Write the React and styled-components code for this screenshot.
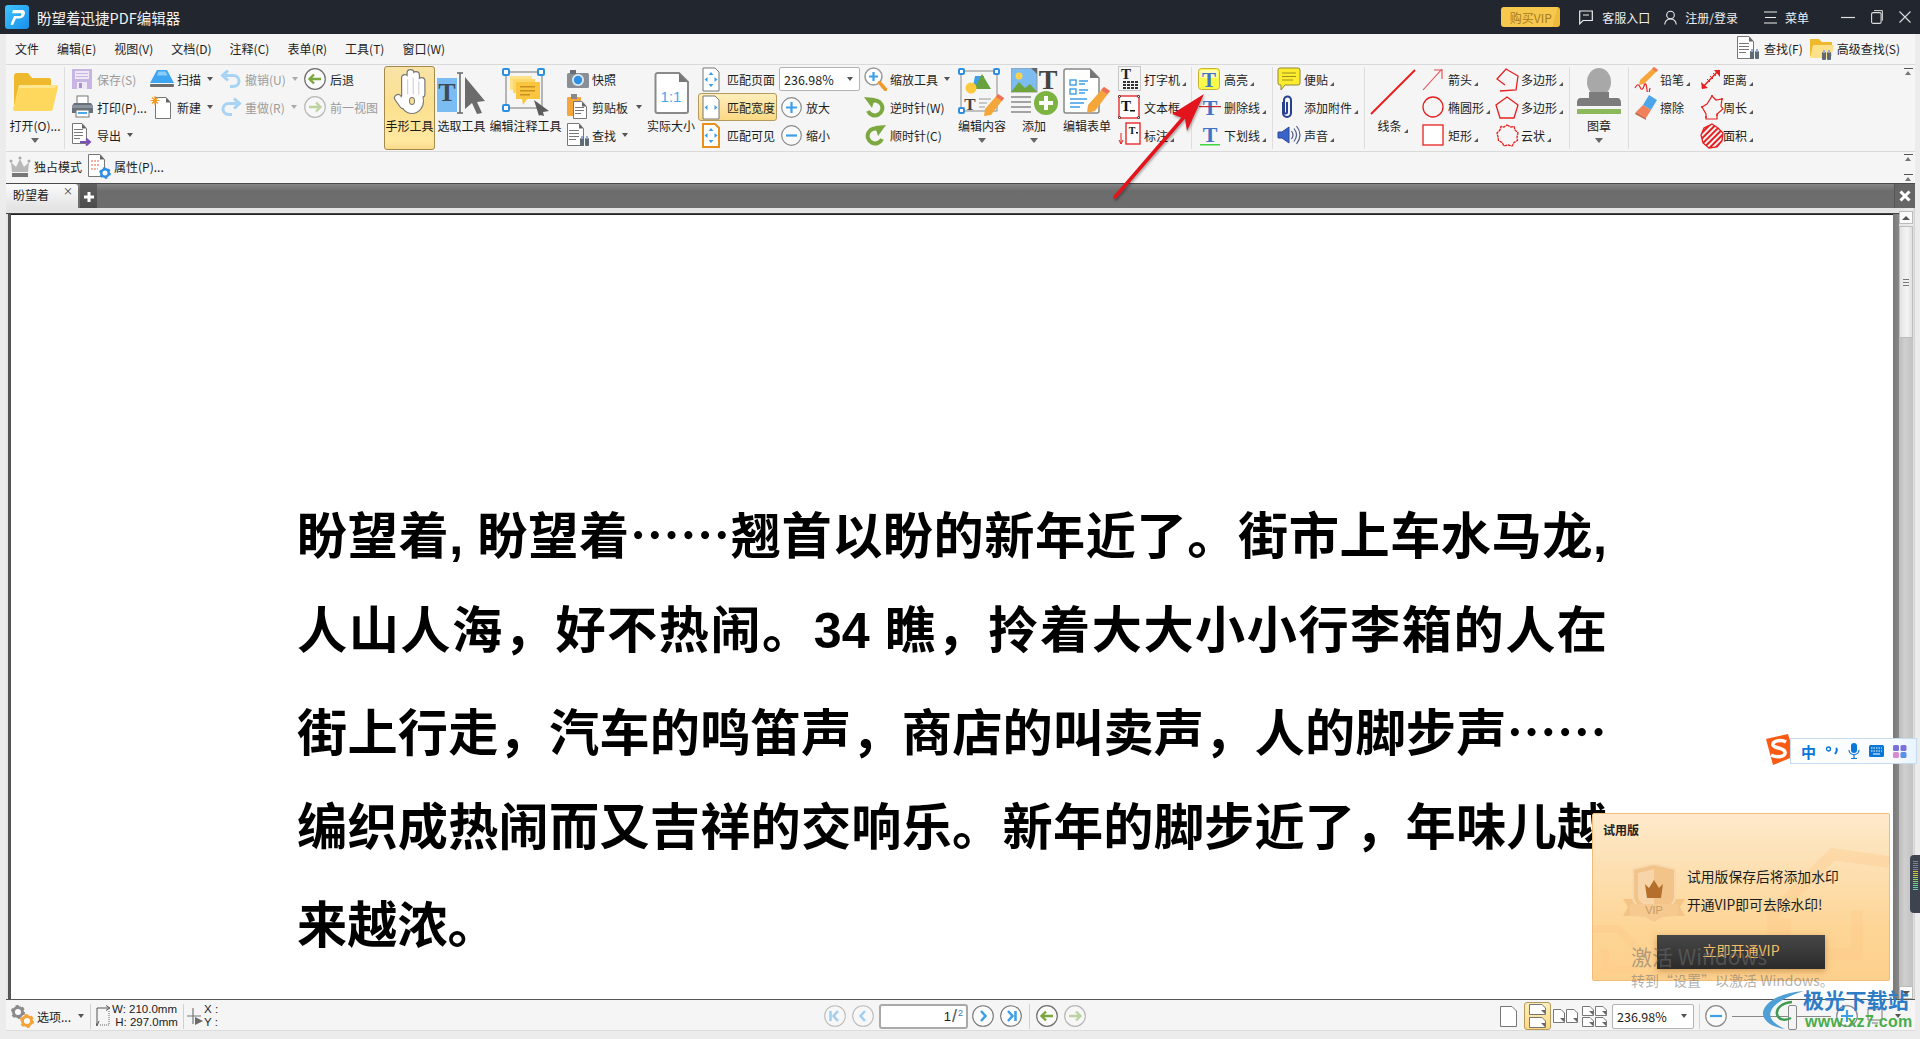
import React from 'react';
import styled, { createGlobalStyle } from 'styled-components';

const CJK = '"Noto Sans CJK SC", "Noto Sans", sans-serif';

const Global = createGlobalStyle`
  html, body { margin: 0; padding: 0; overflow: hidden; background: #ececec; }
  * { box-sizing: border-box; }
`;

const Shell = styled.div`
  position: relative; width: 1920px; height: 1039px; overflow: hidden;
  display: flex; flex-direction: column; font-family: ${CJK}; font-size: 12px; color: #1c1c1c; background: #ececec;
`;
const TitleBar = styled.header`
  height: 34px; flex: none; background: #22262e; color: #f0f0f0; display: flex; align-items: center; padding-left: 5px;
`;
const AppTitle = styled.div`font-size: 14.5px; margin-left: 8px; white-space: nowrap; color: #f2f2f2;`;
const VipButton = styled.div`
  margin-left: auto; width: 59px; height: 20px; border-radius: 3px; display: flex; align-items: center; justify-content: center;
  background: linear-gradient(105deg, #f6c94e 0 88%, #f0b93a 88%); color: #a77a22; font-size: 12px;
`;
const TitleAction = styled.div`
  display: flex; align-items: center; gap: ${p => p.$gap}px; margin-left: ${p => p.$ml}px; font-size: 12px; white-space: nowrap; color: #eee;
`;
const WinControls = styled.div`display: flex; align-items: center; margin-left: 32px; gap: 16px; padding-right: 9px;`;

const Frame = styled.div`flex: 1; min-height: 0; display: flex; flex-direction: column; margin: 0 5px 0 6px; background: #f5f5f5;`;
const MenuBar = styled.nav`
  height: 31px; flex: none; display: flex; align-items: center; gap: 18px; padding-left: 9px; border-bottom: 1px solid #d9d9d9; padding-bottom: 2px;
`;
const MenuItem = styled.span`white-space: nowrap; color: #222;`;
const MenuRight = styled.div`margin-left: auto; display: flex; align-items: center; padding-right: 15px; gap: 2px;`;
const MenuTool = styled.div`display: flex; align-items: center; gap: 3px; margin-left: ${p => p.$ml || 0}px;`;

const Ribbon = styled.section`
  height: 87px; flex: none; display: flex; border-bottom: 1px solid #d9d9d9;
`;
const Sep = styled.div`width: 1px; flex: none; background: #dedede; margin: 2px 0 2px;`;
const ColBox = styled.div`
  width: ${p => p.$w}px; flex: none; padding-left: ${p => p.$pad || 0}px; display: flex; flex-direction: column;
`;
const ToolRow = styled.div`
  height: 28px; flex: none; display: flex; align-items: center; white-space: nowrap; position: relative;
  color: ${p => p.$off ? '#9b9b9b' : '#1e1e1e'};
  ${p => p.$active ? `
    margin-left: -4px; padding-left: 4px; width: 79px; border: 1px solid #b59a5c; border-radius: 3px; padding-left: 3px;
    background: linear-gradient(#fdeebc, #fbd983);
  ` : ''}
`;
const IconSlot = styled.span`width: ${p => p.$w}px; flex: none; display: flex; align-items: center;`;
const DropArrow = styled.i`
  display: inline-block; margin-left: ${p => p.$ml || 6}px; width: 0; height: 0; border-left: 3.5px solid transparent; border-right: 3.5px solid transparent;
  border-top: 4px solid ${p => p.$off ? '#aaa' : '#555'};
`;
const CornerMark = styled.i`
  display: inline-block; align-self: flex-end; margin: 0 0 7px 2px; width: 0; height: 0; border-left: 4px solid transparent; border-bottom: 4px solid #555;
`;
const Large = styled.div`
  width: ${p => p.$w}px; flex: none; display: flex; flex-direction: column; align-items: center; height: 84px; margin-top: 1px; white-space: nowrap; border: 1px solid transparent;
  ${p => p.$active ? 'background: linear-gradient(#f8e3a6, #fbe08f 48%, #ffe9a0 90%, #f9d98a); border-color: #a58a4e; border-radius: 3px;' : ''}
`;
const LargeIcon = styled.div`height: 50px; flex: none; display: flex; align-items: center; justify-content: center;`;
const LargeLabel = styled.div`height: 18px; line-height: 18px; display: flex; align-items: center;`;
const LargeDrop = styled(DropArrow)`margin: 3px 0 0 0; border-left-width: 4px; border-right-width: 4px; border-top-width: 5px; border-top-color: #666;`;
const ZoomCombo = styled.div`
  width: ${p => p.$w}px; height: ${p => p.$h}px; flex: none; border: 1px solid #b3b3b3; border-radius: 2px; background: #fff; display: flex; align-items: center; justify-content: space-between;
  padding: 0 6px 0 4px; font-size: 12.5px; margin: ${p => p.$m || 0};
`;
const Collapse = styled.div`
  margin-left: auto; width: 9px; height: 8px; margin-right: 2px; margin-top: ${p => p.$mt || 3}px; border-top: 1px solid #555; position: relative; flex: none;
  &::after { content: ''; position: absolute; left: 1px; top: 2px; border-left: 3.5px solid transparent; border-right: 3.5px solid transparent; border-bottom: 4px solid #777; }
`;
const QuickBar = styled.div`height: 31px; flex: none; display: flex; align-items: center; padding: 0 0 2px 3px; position: relative;`;
const QuickTool = styled.div`display: flex; align-items: center; gap: 3px; margin-left: ${p => p.$ml || 0}px; white-space: nowrap;`;
const QuickEnd = styled.div`margin-left: auto; display: flex; flex-direction: column; gap: 11px; padding-top: 1px;`;

const TabBar = styled.div`
  height: 25px; flex: none; display: flex; border-top: 1px solid #4a4a4a; background: linear-gradient(#858585, #6c6c6c 30%, #6e6e6e);
`;
const Tab = styled.div`
  width: 72px; background: linear-gradient(#fafafa, #e4e4e4); border-radius: 0 3px 0 0; display: flex; justify-content: space-between; padding: 2px 5px 0 7px; font-size: 12px; color: #222;
`;
const TabClose = styled.span`font-size: 10px; line-height: 10px; color: #333;`;
const TabAdd = styled.div`
  width: 17px; margin-left: 2px; background: linear-gradient(#5f5f5f, #4c4c4c); display: flex; align-items: center; justify-content: center; padding-top: 2px;
`;
const BarClose = styled.div`margin-left: auto; width: 21px; display: flex; align-items: center; justify-content: center; border-left: 1px solid #555; background: #666;`;

const Main = styled.main`flex: 1; min-height: 0; display: flex; border-bottom: 1px solid #555;`;
const Canvas = styled.div`flex: 1; display: flex; flex-direction: column; background: #e4e4e4; padding-top: 5px; min-width: 0;`;
const CanvasInner = styled.div`
  flex: 1; min-height: 0; display: flex; padding: 1px 6px 0 5px;
  background: linear-gradient(#444 0 1px, transparent 1px), linear-gradient(90deg, #e6e6e6 0 2px, #555 2px, #555 99%, #888);
`;
const Page = styled.article`
  flex: 1; background: #fff; padding: 268px 0 0 286px; overflow: hidden; min-width: 0; border-top: 1px solid #222;
`;
const DocLine = styled.p`
  margin: 0; width: 1310px; height: 98.6px; line-height: 98.6px; font-size: 50.2px; font-weight: 700; color: #000; white-space: nowrap; font-family: "Liberation Sans", "Noto Sans CJK SC", sans-serif;
  ${p => p.$just ? 'white-space: normal; text-align: justify; text-align-last: justify;' : ''}
`;
const Dots = styled.span`font-family: "Noto Sans CJK SC", sans-serif;`;
const ScrollBar = styled.div`
  width: 16px; flex: none; padding: 3px 2px 0 0; background: linear-gradient(90deg, #e4e4e4, #eee 85%, #ccc); display: flex; flex-direction: column;
`;
const ScrollBtn = styled.div`
  height: 13px; background: #fafafa; border: 1px solid #bbb; display: flex; align-items: center; justify-content: center; flex: none;
  &::after { content: ''; border-left: 4px solid transparent; border-right: 4px solid transparent; ${p => p.$down ? 'border-top: 4px solid #555' : 'border-bottom: 4px solid #555'}; }
`;
const ScrollThumb = styled.div`
  height: 112px; flex: none; margin-top: 2px; background: linear-gradient(90deg, #e4e4e4, #f4f4f4 60%, #e0e0e0); border: 1px solid #bdbdbd; display: flex; flex-direction: column; align-items: center; justify-content: center; gap: 2px;
  & > i { width: 6px; height: 1px; background: #777; }
`;
const ScrollTrack = styled.div`flex: 1; background: linear-gradient(90deg, #bbb, #cfcfcf 40%, #c2c2c2);`;

const StatusBar = styled.footer`height: 31px; flex: none; display: flex; align-items: center; border-bottom: 1px solid #dcdcdc; padding-top: 2px;`;
const StatusLeft = styled.div`width: 818px; flex: none; display: flex; align-items: center; padding-left: 4px; height: 100%;`;
const StatusSep = styled.div`width: 1px; height: 25px; background: #d0d0d0; flex: none; margin-left: ${p => p.$ml || 0}px; margin-right: ${p => p.$mr || 0}px;`;
const DimText = styled.div`display: flex; flex-direction: column; line-height: 13.5px; font-size: 11.5px; font-family: "Liberation Sans", ${CJK}; white-space: nowrap; width: ${p => p.$w}px;`;
const StatusNav = styled.div`width: 676px; flex: none; display: flex; align-items: center; gap: 6px; height: 100%;`;
const PageInput = styled.div`
  width: 89px; height: 25px; flex: none; margin: 0 -2px 0 -1px; background: #fff; border: 2px solid #a9a9a9; border-radius: 3px; display: flex; align-items: center; justify-content: flex-end; padding-right: 3px; font-family: "Liberation Sans", sans-serif; font-size: 13px;
`;
const PageSlash = styled.span`color: #555; font-size: 18px; margin: 0 1px; font-weight: 300; line-height: 18px;`;
const PageTotal = styled.sup`font-size: 9px; color: #2b79c2; align-self: flex-start; margin-top: 2px; line-height: 10px;`;
const StatusRight = styled.div`flex: 1; display: flex; align-items: center; height: 100%;`;
const StatusItem = styled.div`
  flex: none; margin-left: ${p => p.$ml || 0}px; display: flex; align-items: center; justify-content: center;
  ${p => p.$on ? 'width: 27px; height: 28px; border: 1px solid #b59a5c; border-radius: 3px; background: linear-gradient(#fdeebc, #fbd983);' : ''}
`;
const Slider = styled.div`
  width: 99px; height: 1px; flex: none; background: #888; position: relative; margin-left: 5px;
  &::after { content: ''; position: absolute; left: 56px; top: -11px; width: 7px; height: 23px; border: 1px solid #888; border-radius: 2px; background: #f4f4f4; }
`;

const Popup = styled.aside`
  position: absolute; left: 1592px; top: 813px; width: 298px; height: 168px; border: 1px solid #f0bc78; border-radius: 2px;
  background: linear-gradient(#fde9cb, #fdd595 70%, #fdd08c); overflow: hidden;
`;
const PopupTitle = styled.div`position: absolute; left: 10px; top: 7px; font-size: 12px; font-weight: 700; color: #222;`;
const PopupBody = styled.div`position: absolute; left: 94px; top: 48px; font-size: 13.8px; line-height: 28px; color: #1c1c1c; white-space: nowrap;`;
const PopupBtn = styled.div`
  position: absolute; left: 64px; top: 121px; width: 168px; height: 34px; padding-bottom: 5px; background: linear-gradient(#474747, #2b2b2b); color: #f5bd68; font-size: 14px;
  display: flex; align-items: center; justify-content: center; box-shadow: 0 2px 6px rgba(160,100,30,.5);
`;
const PopupDeco = styled.svg`position: absolute; left: 0; top: 0;`;
const PopupBadge = styled.svg`position: absolute; left: 30px; top: 50px;`;
const Activate = styled.div`
  position: absolute; left: 1631px; top: 941px; color: rgba(110,110,110,.55); pointer-events: none; white-space: nowrap;
`;
const ActivateBig = styled.div`font-size: 21px; line-height: 30px;`;
const ActivateSmall = styled.div`font-size: 14px; line-height: 20px; margin-top: -1px;`;
const ImeBar = styled.div`
  position: absolute; left: 1790px; top: 738px; width: 127px; height: 26px; background: linear-gradient(90deg, #fff, #f8fbff 80%, #e8f4ff); border: 1px solid #c7dcf1; display: flex; align-items: center; padding-left: 10px; gap: 9px;
`;
const ImeZh = styled.span`color: #0a76d8; font-size: 15px; font-weight: 700; line-height: 15px;`;
const ImeLogo = styled.svg`position: absolute; left: 1762px; top: 733px;`;
const SideWidget = styled.div`
  position: absolute; left: 1910px; top: 855px; width: 10px; height: 58px; border-radius: 4px 0 0 4px; background: #3d4450; padding: 6px 0 0 3px;
  display: flex; flex-direction: column; gap: 1px;
`;
const SideTick = styled.i`width: 5px; height: 1px; flex: none; background: ${p => p.$c};`;
const Watermark = styled.div`position: absolute; left: 1803px; top: 986px; pointer-events: none; white-space: nowrap;`;
const WatermarkTitle = styled.div`font-size: 21px; line-height: 27px; font-weight: 700; color: #2d7cc6; letter-spacing: .2px;`;
const WatermarkUrl = styled.div`font-size: 16px; line-height: 17px; font-weight: 700; color: #49ad4c; font-family: "Liberation Sans", sans-serif; margin-left: 2px; letter-spacing: .3px;`;
const WatermarkLogo = styled.svg`position: absolute; left: 1762px; top: 990px; pointer-events: none;`;
const RedArrow = styled.svg`position: absolute; left: 1105px; top: 85px; pointer-events: none; filter: drop-shadow(1px 2px 1px rgba(0,0,0,.3));`;

/* ---------- icons ---------- */
const S = ({ w, h, children }) => <svg width={w} height={h} viewBox={`0 0 ${w} ${h}`} fill="none" style={{ display: 'block', flex: 'none' }}>{children}</svg>;
const Doc = ({ x = 0, y = 0, w = 16, h = 22, s = '#777' }) => (
  <g transform={`translate(${x} ${y})`}>
    <path d={`M.5 .5H${w - 5}L${w - .5} 5.5V${h - .5}H.5z`} fill="#fff" stroke={s} />
    <path d={`M${w - 5} .5L${w - .5} 5.5H${w - 5}z`} fill="#666" />
  </g>
);
const Lines = ({ x, y, n = 3, w = 8, gap = 3, c = '#777' }) => Array.from({ length: n }, (_, i) => <rect key={i} x={x} y={y + i * gap} width={i === n - 1 ? w - 3 : w} height="1" fill={c} />);
const Binoc = ({ x, y }) => (
  <g transform={`translate(${x} ${y})`} fill="#5e6a74"><rect x="0" y="2" width="4" height="8" rx="1" /><rect x="5" y="2" width="4" height="8" rx="1" /><rect x="1" y="0" width="2" height="3" fill="#9ac" /><rect x="6" y="0" width="2" height="3" fill="#9ac" /></g>
);
const TT = ({ x, y, size = 22, c = '#3f74c8' }) => <text x={x} y={y} fontFamily="Liberation Serif" fontWeight="700" fontSize={size} fill={c} textAnchor="middle">T</text>;

const LogoIcon = () => <S w={24} h={24}><defs><linearGradient id="lg" x1="0" y1="0" x2="1" y2="1"><stop stopColor="#3ec3ff" /><stop offset="1" stopColor="#1a8fe8" /></linearGradient></defs><rect width="24" height="24" rx="3" fill="url(#lg)" /><path d="M8 5h8.500c3 0 4 2 3.200 4.500-.8 2.600-3 4-5.700 4H11L8 20 5.500 19.500 9 11h5c1.500 0 2.200-.6 2.400-1.600.1-.8-.3-1.200-1.200-1.200H7z" fill="#fff" /></S>;
const FolderIcon = () => <S w={46} h={38}><path d="M2 3a3 3 0 013-3h11l4 5h17a2 2 0 012 2v26H2z" fill="#eeb92d" /><path d="M7 12h37a2 2 0 012 2l-5 21a3 3 0 01-3 3H3a2 2 0 01-2-2z" fill="#fdd85c" /><path d="M7 12h37l-1 3H7L3 32z" fill="#ffe68f" /></S>;
const SaveIcon = () => <S w={22} h={22}><path d="M1 1h20v20H1z" fill="#c7b6e3" rx="2" /><rect x="4" y="3" width="14" height="8" fill="#efe9f7" /><rect x="5" y="5" width="12" height="1" fill="#c7b6e3" /><rect x="5" y="8" width="12" height="1" fill="#c7b6e3" /><rect x="6" y="14" width="10" height="7" fill="#efe9f7" /><rect x="8" y="15" width="3" height="5" fill="#a795c9" /></S>;
const ScanIcon = () => <S w={24} h={20}><path d="M7 1h10l7 13H0z" fill="#3ea5f3" /><path d="M8.500 2.500h7l2 4H7z" fill="#8bcdfa" /><rect x="0" y="15" width="24" height="3" rx="1" fill="#6c6c6c" /></S>;
const UndoIcon = ({ flip }) => <S w={22} h={20}><g transform={flip ? 'translate(22 0) scale(-1 1)' : ''} stroke="#a7d3f5" strokeWidth="3" fill="none"><path d="M5 6.500h8c8 0 8 11 0 11h-3" /><path d="M8 1.500L2.500 6.500l5.500 5" /></g></S>;
const BackIcon = ({ flip, off, size = 22 }) => <S w={size} h={size}><g opacity={off ? .45 : 1}><circle cx={size / 2} cy={size / 2} r={size / 2 - .7} fill="#fbfbfb" stroke="#6f6f6f" strokeWidth="1.200" /><g transform={`translate(${size / 2} ${size / 2}) scale(${flip ? -1 : 1} 1)`} stroke="#7aa83c" strokeWidth="2.400" fill="none"><path d="M6 0H-5M-1 -4.500L-5.500 0-1 4.500" /></g></g></S>;
const PrintIcon = () => <S w={23} h={24}><rect x="6" y="1" width="11" height="8" fill="#fff" stroke="#777" /><path d="M3 8h17l2 3v7H1v-7z" fill="#67717b" /><rect x="1" y="10" width="21" height="3" fill="#8b949c" /><rect x="5" y="15" width="13" height="7" fill="#fff" stroke="#777" /><rect x="7" y="17" width="9" height="2" fill="#4aa8ef" /></S>;
const NewIcon = () => <S w={22} h={25}><Doc x={5} y={2} w={16} h={22} /><g stroke="#f79a1d" strokeWidth="1.200"><path d="M5 1v9M.5 5.500h9M2 2.500l6 6M8 2.500l-6 6" /></g></S>;
const ExportIcon = () => <S w={22} h={24}><Doc x={1} y={0} w={15} h={21} /><Lines x={3} y={6} n={4} w={9} /><path d="M9 19h9M15 15.500l4 3.500-4 3.500" stroke="#7a4fb8" strokeWidth="2" fill="none" /></S>;
const HandIcon = () => <S w={36} h={48}><g strokeLinecap="round"><g stroke="#787878" strokeWidth="8"><path d="M13 26V10M18.500 26V5M24 26V7M29.500 26V13M6 30l5 7" /><ellipse cx="20" cy="33" rx="7" ry="8" strokeWidth="10" /></g><g stroke="#fff" strokeWidth="5.600"><path d="M13 26V10M18.500 26V5M24 26V7M29.500 26V13M6 30l5 7" /><ellipse cx="20" cy="33" rx="7" ry="8" strokeWidth="8" /></g><g stroke="#bbb" strokeWidth=".8"><path d="M15.700 26V12M21.200 26V10M26.800 26V14" /></g></g></S>;
const SelectIcon = () => <S w={49} h={46}><rect x="0" y="9" width="20" height="34" fill="#7bbcf2" /><TT x={10} y={32} size={26} c="#3e4a55" /><path d="M20 4h6M20 44h6M23 4v40" stroke="#666" strokeWidth="1.500" /><path d="M28 8l20 24-8 1 5 11-5 1-5-11-7 6z" fill="#6b6b6b" /></S>;
const AnnotIcon = () => <S w={48} h={48}><rect x="4" y="4" width="36" height="36" fill="none" stroke="#8a8a8a" strokeWidth="1.200" /><g fill="#fff" stroke="#2e8fe0" strokeWidth="2"><rect x="1" y="1" width="6" height="6" rx="1" /><rect x="36" y="1" width="6" height="6" rx="1" /><rect x="1" y="37" width="6" height="6" rx="1" /></g><rect x="8" y="8" width="22" height="14" fill="#fde28a" /><rect x="11" y="11" width="22" height="14" fill="#fdd768" /><path d="M14 14h24v17H25l-4 6-1-6h-6z" fill="#fbc63f" /><g fill="#c98f20"><rect x="18" y="18" width="15" height="1.500" /><rect x="18" y="22" width="15" height="1.500" /><rect x="18" y="26" width="10" height="1.500" /></g><path d="M32 32l15 11-6 1 1 4-4-1-1 1z" fill="#5c5c5c" /></S>;
const CameraIcon = () => <S w={22} h={20}><rect x="0" y="4" width="22" height="15" rx="1.500" fill="#8a8f96" /><rect x="3" y="1" width="6" height="4" fill="#6a6f76" /><circle cx="11" cy="11" r="6" fill="#dce9f4" /><circle cx="11" cy="11" r="4.200" fill="#2f8fe3" /></S>;
const ClipIcon = () => <S w={22} h={26}><rect x="0" y="3" width="14" height="19" rx="1" fill="#f4a73c" /><rect x="4" y="0" width="6" height="5" fill="#888" /><Doc x={6} y={7} w={14} h={18} /><Lines x={8} y={13} n={3} w={9} /></S>;
const FindIcon = () => <S w={24} h={25}><Doc x={0} y={0} w={17} h={23} /><Lines x={2} y={7} n={4} w={10} /><Binoc x={13} y={13} /></S>;
const ActualIcon = () => <S w={35} h={43}><path d="M1.500 4a2 2 0 012-2H25l9 9v29a2 2 0 01-2 2H3.500a2 2 0 01-2-2z" fill="#fff" stroke="#8a8a8a" strokeWidth="2" /><path d="M25 2l9 9h-9z" fill="#777" /><text x="17" y="31" fontFamily="Liberation Sans" fontSize="15" fill="#49a5ea" textAnchor="middle">1:1</text></S>;
const FitIcon = ({ width, border }) => <S w={18} h={25}><path d="M1 1h12l4 4v19H1z" fill="#fff" stroke={border ? '#e98f1e' : '#777'} strokeWidth={border ? 2 : 1} /><g fill="#3d9fe8"><path d="M2.500 12.500l3-2.500v5zM15.500 12.500l-3-2.500v5z" />{!width && <path d="M9 5l-2.500 3h5zM9 20l-2.500-3h5z" />}</g></S>;
const CirclePM = ({ minus, size = 21 }) => <S w={size} h={size}><circle cx={size / 2} cy={size / 2} r={size / 2 - .7} fill="#fafafa" stroke="#8a8a8a" strokeWidth="1.200" /><path d={minus ? `M5 ${size / 2}h${size - 10}` : `M5 ${size / 2}h${size - 10}M${size / 2} 5v${size - 10}`} stroke="#3d9fe8" strokeWidth="2.200" /></S>;
const ZoomToolIcon = () => <S w={23} h={24}><circle cx="9.500" cy="9.500" r="8.500" fill="#fff" stroke="#999" strokeWidth="1.500" /><path d="M5 9.500h9M9.500 5v9" stroke="#3d9fe8" strokeWidth="2.200" /><path d="M15.500 15.500l6 7" stroke="#f09a2b" strokeWidth="3.500" strokeLinecap="round" /></S>;
const RotateIcon = ({ flip }) => <S w={22} h={22}><g transform={flip ? 'translate(22 0) scale(-1 1)' : ''}><path d="M7 5.500a7.500 7.500 0 11-3 9.500" stroke="#7ba93f" strokeWidth="4" fill="none" /><path d="M0 1l11 1-3 10z" fill="#7ba93f" /></g></S>;
const EditContentIcon = () => <S w={48} h={48}><rect x="3" y="3" width="36" height="40" fill="none" stroke="#8a8a8a" /><g fill="#fff" stroke="#2e8fe0" strokeWidth="2"><rect x="1" y="1" width="5" height="5" rx="1" /><rect x="36" y="1" width="5" height="5" rx="1" /><rect x="1" y="40" width="5" height="5" rx="1" /></g><path d="M17 8h9v10H15z" fill="#3d9fe8" /><path d="M24 6l9 15H16z" fill="#67a23f" /><circle cx="13" cy="20" r="5.500" fill="#fdc93d" /><TT x={12} y={42} size={17} c="#444" /><path d="M21 31h12M21 35h8M21 39h6" stroke="#999" /><path d="M40 26l6 4-13 17-7 1 1-7z" fill="#f5a63b" /><path d="M40 26l6 4-2 3-6-4z" fill="#ef6f5a" /></S>;
const AddIcon = () => <S w={47} h={48}><rect x="0" y="0" width="26" height="24" fill="#7cbcf0" stroke="#999" /><path d="M0 24l8-10 6 6 5-4 7 8z" fill="#6fa53d" /><circle cx="8" cy="8" r="3.500" fill="#fdd24f" /><path d="M20 0h6v6z" fill="#666" /><TT x={37} y={21} size={28} c="#444" /><path d="M0 29h20M0 34h20M0 39h20M0 44h20" stroke="#888" strokeWidth="1.500" /><circle cx="35" cy="35" r="12" fill="#7cb342" /><path d="M28 35h14M35 28v14" stroke="#fff" strokeWidth="4" /></S>;
const FormIcon = () => <S w={48} h={48}><path d="M1 3a2 2 0 012-2h24l9 9v33a2 2 0 01-2 2H3a2 2 0 01-2-2z" fill="#fff" stroke="#888" strokeWidth="1.500" /><path d="M27 1l9 9h-9z" fill="#777" /><g fill="none" stroke="#3d9fe8" strokeWidth="1.400"><rect x="7" y="12" width="6" height="5" /><rect x="7" y="21" width="6" height="5" /></g><g stroke="#3d9fe8" strokeWidth="1.500"><path d="M16 13h9M16 16h6M16 22h9M16 25h6M7 31h17M7 35h14M7 39h10" /></g><path d="M41 19l6 4-15 20-8 2 1-8z" fill="#f5a63b" /><path d="M41 19l6 4-3 3-6-4z" fill="#ef6f5a" /></S>;
const TypewriterIcon = () => <S w={24} h={26}><rect x=".5" y=".5" width="22" height="24" stroke="#999" strokeDasharray="1 1" /><TT x={8} y={13} size={15} c="#222" /><g fill="#333">{[0, 1, 2].map(r => [0, 1, 2, 3].map(c => <rect key={`${r}${c}`} x={5 + c * 4} y={15 + r * 3} width="3" height="2" />))}</g></S>;
const BoxTIcon = () => <S w={22} h={24}><rect x="1" y="1" width="20" height="22" stroke="#e61c1c" strokeWidth="1.300" fill="#fff" /><g fill="#fff" stroke="#222"><circle cx="1.500" cy="1.500" r="1" /><circle cx="20.500" cy="1.500" r="1" /><circle cx="1.500" cy="22.500" r="1" /><circle cx="20.500" cy="22.500" r="1" /></g><TT x={8} y={16} size={15} c="#111" /><rect x={12} y={15} width="5" height="1.500" fill="#111" /></S>;
const CalloutIcon = () => <S w={24} h={26}><g transform="translate(7 0)"><rect x="1" y="1" width="14" height="21" stroke="#e61c1c" strokeWidth="1.300" fill="#fff" /><TT x={7} y={12} size={10} c="#111" /><rect x="11" y="10" width="2" height="1.500" fill="#111" /></g><path d="M3 11v11M1 18l2 4 2-4" stroke="#e61c1c" /></S>;
const HighlightIcon = () => <S w={22} h={22}><rect x=".5" y=".5" width="21" height="21" rx="3" fill="#fafa4c" stroke="#c8b32f" /><rect x="2" y="2" width="18" height="8" rx="2" fill="#fdfdb4" /><TT x={11} y={19} size={21} /></S>;
const StrikeIcon = () => <S w={24} h={22}><TT x={12} y={19} size={22} /><rect x="1" y="10" width="22" height="1.200" fill="#c42a2a" /></S>;
const UnderIcon = () => <S w={24} h={23}><TT x={12} y={18} size={22} /><rect x="2" y="20" width="20" height="1.500" fill="#3ed83e" /></S>;
const NoteIcon = () => <S w={24} h={24}><path d="M3 1h18a2 2 0 012 2v13a2 2 0 01-2 2H8l-4 5v-5H3a2 2 0 01-2-2V3a2 2 0 012-2z" fill="#fdec2e" stroke="#8e8a2b" /><path d="M5 6h14M5 9.500h14M5 13h11" stroke="#9a8f25" /></S>;
const PaperclipIcon = () => <S w={20} h={25}><path d="M6 7v11a4 4 0 008 0V5a3.500 3.500 0 00-7 0v12a1.500 1.500 0 003 0V7" stroke="#27418f" strokeWidth="2" fill="none" /></S>;
const SpeakerIcon = () => <S w={24} h={22}><path d="M1 8h4l7-5v16l-7-5H1z" fill="#3a63c8" stroke="#2b4a9a" /><path d="M14.500 7q3 4 0 8M17 4.500q5 6.500 0 13M19.500 2q7 9 0 18" stroke="#4d5a89" strokeWidth="1.200" fill="none" /></S>;
const LineIcon = () => <S w={46} h={46}><path d="M1 45L45 1" stroke="#e91f1f" strokeWidth="2" /></S>;
const ArrowIcon = () => <S w={22} h={24}><path d="M1 23L20 2M12 3h8v9" stroke="#e5484d" strokeWidth="1.100" /></S>;
const EllipseIcon = () => <S w={22} h={24}><circle cx="11" cy="12" r="10" stroke="#e62020" strokeWidth="1.300" /></S>;
const RectIcon = () => <S w={22} h={24}><rect x="1" y="2" width="20" height="20" stroke="#e62020" strokeWidth="1.300" fill="#fff" /></S>;
const PolylineIcon = () => <S w={24} h={25}><path d="M5 24l16-1 2-14L11 2 2 12l8 6" stroke="#e62020" strokeWidth="1.300" /></S>;
const PentagonIcon = () => <S w={24} h={25}><path d="M12 2l11 8-4 13H5L1 10z" stroke="#e62020" strokeWidth="1.300" /></S>;
const CloudIcon = () => <S w={24} h={25}><path d="M12 2l4 2 3-.5 1 3.500 3 3-1 4 .5 3.500-3.500 2-2 3.500-4-1-4 1-2-3.500-3.500-2L3 14l-1-4 3-3 1-3.500L9 4z" stroke="#e62020" strokeWidth="1.300" strokeDasharray="3 .6" /></S>;
const StampIcon = () => <S w={46} h={48}><ellipse cx="23" cy="14" rx="12" ry="14" fill="#a8a8a8" /><path d="M13 24h20v6h8c3 0 4 2 4 5v3H1v-3c0-3 1-5 4-5h8z" fill="#7c7c7c" /><rect x="1" y="41" width="44" height="5" fill="#8cb85c" /></S>;
const PencilIcon = () => <S w={25} h={26}><path d="M20 1l4 3-14 14-5 1 1-5z" fill="#f5a73c" /><path d="M20 1l4 3-2 2-4-3z" fill="#ef7a5a" /><path d="M1 22q3-6 5-1t4-1 3 4 3-2" stroke="#e62020" strokeWidth="1.200" /></S>;
const EraserIcon = () => <S w={24} h={26}><path d="M15 1l8 5-6 10-8-5z" fill="#4ea6ea" /><path d="M9 11l8 5-5 8-10-6z" fill="#f0805a" /><path d="M2 18l10 6v2L1 20z" fill="#c86a4a" /></S>;
const DistanceIcon = () => <S w={21} h={22}><path d="M2 20L19 2" stroke="#e62020" strokeWidth="1.500" /><path d="M14 2h6v7zM1 14l1 7 6-1z" fill="#e62020" /><path d="M7 11l3 3M10 8l3 3M13 5l3 3" stroke="#e62020" /></S>;
const PerimIcon = () => <S w={24} h={26}><path d="M12 2l4 4 6-1-1 7 2 3-6 5v5H6v-5l-4-7 5-3z" stroke="#e62020" strokeWidth="1.200" /><g fill="#e62020"><circle cx="12" cy="2" r="1" /><circle cx="22" cy="5" r="1" /><circle cx="2" cy="13" r="1" /><circle cx="6" cy="23" r="1" /><circle cx="17" cy="21" r="1" /></g></S>;
const AreaIcon = () => <S w={24} h={27}><defs><pattern id="hatch" width="4" height="4" patternUnits="userSpaceOnUse" patternTransform="rotate(45)"><rect width="2" height="4" fill="#e62020" /></pattern></defs><path d="M12 2l6 4 5 5-1 8-5 6-8 1-6-5-2-8 3-7z" fill="url(#hatch)" stroke="#e62020" strokeWidth="1.300" /></S>;
const CrownIcon = () => <S w={22} h={22}><path d="M2 6l5 5 4-8 4 8 5-5-1 10H3z" fill="#b8b8b8" /><circle cx="2" cy="5" r="1.500" fill="#aaa" /><circle cx="11" cy="2" r="1.500" fill="#aaa" /><circle cx="20" cy="5" r="1.500" fill="#aaa" /><rect x="3" y="17" width="16" height="4" fill="#777" /></S>;
const Gear = ({ x, y, r, c }) => <g transform={`translate(${x} ${y})`}><circle r={r * .75} stroke={c} strokeWidth={r * .5} fill="#fff" /><circle r={r} stroke={c} strokeWidth={r * .35} strokeDasharray={`${r * .5} ${r * .55}`} fill="none" /></g>;
const PropsIcon = () => <S w={23} h={26}><Doc x={0} y={0} w={17} h={23} /><path d="M3 7h9M3 11h9M3 15h7" stroke="#e9633a" strokeDasharray="2 1" /><Gear x={17} y={19} r={5} c="#2f8fe3" /></S>;
const GearsIcon = () => <S w={24} h={23}><Gear x={8} y={7} r={6} c="#8b8b8b" /><Gear x={17} y={16} r={6} c="#f4a437" /></S>;
const SizeIcon = () => <S w={16} h={23}><path d="M1 9V3h12M10 .5l4 2.500-4 2.500M1 9v11M-1 16l2 5 2-5" stroke="#555" fill="none" /><path d="M4 20h10M13 6v13" stroke="#666" strokeDasharray="1 1" /></S>;
const CrossIcon = () => <S w={17} h={23}><path d="M6 3v16M0 11h14" stroke="#777" strokeWidth="1.200" /><path d="M8 12l8 4-8 4z" fill="#6a6a6a" /></S>;
const NavIcon = ({ kind, off }) => <S w={22} h={22}><g opacity={off ? .45 : 1}><circle cx="11" cy="11" r="10.300" fill="#fbfbfb" stroke="#777" strokeWidth="1.100" /><g stroke="#3d9fe8" strokeWidth="2.500" fill="none">{kind === 'first' && <path d="M6.500 6v10M14 6l-4.500 5 4.500 5" />}{kind === 'prev' && <path d="M13 6l-4.500 5 4.500 5" />}{kind === 'next' && <path d="M9 6l4.500 5-4.500 5" />}{kind === 'last' && <path d="M15.500 6v10M8 6l4.500 5-4.500 5" />}</g></g></S>;
const PageGlyph = ({ kind }) => {
  const p = (x, y, w, h, k) => <g key={k}><path d={`M${x + .5} ${y + .5}H${x + w - 4}L${x + w - .5} ${y + 4}V${y + h - .5}H${x + .5}z`} fill="#fff" stroke="#777" /><path d={`M${x + w - 5} ${y + h - 5}h4v4z`} fill="#666" /></g>;
  if (kind === 'one') return <S w={17} h={21}><path d="M.5 .5H12L16.500 5V20.500H.5z" fill="#fff" stroke="#777" /></S>;
  if (kind === 'two') return <S w={25} h={16}>{p(0, 1, 12, 14, 1)}{p(13, 1, 12, 14, 2)}</S>;
  if (kind === 'four') return <S w={25} h={21}>{p(0, 0, 12, 10, 1)}{p(13, 0, 12, 10, 2)}{p(0, 11, 12, 10, 3)}{p(13, 11, 12, 10, 4)}</S>;
  return <S w={17} h={24}>{p(0, 0, 17, 11, 1)}{p(0, 13, 17, 11, 2)}</S>;
};
const FitWinIcon = () => <S w={16} h={16}><path d="M1 1h14v11H1z" stroke="#777" /><path d="M5 15h6" stroke="#777" /></S>;
const TitleIconChat = () => <S w={14} h={15}><path d="M.7 1h12.600v9.500H4L.7 13.800z" stroke="#eee" strokeWidth="1.200" /><path d="M4 5h6" stroke="#eee" /></S>;
const TitleIconUser = () => <S w={13} h={15}><circle cx="6.500" cy="5" r="3.800" stroke="#eee" strokeWidth="1.100" /><path d="M.7 14.500c.5-3.500 2.500-5.500 5.800-5.500s5.300 2 5.800 5.500" stroke="#eee" strokeWidth="1.100" /></S>;
const TitleIconMenu = () => <S w={13} h={13}><path d="M0 1h13M1 6.500h11M0 12h13" stroke="#eee" /></S>;
const WinMin = () => <S w={14} h={14}><path d="M0 7.500h14" stroke="#ddd" strokeWidth="1.200" /></S>;
const WinMax = () => <S w={12} h={14}><rect x=".6" y="2.600" width="9.500" height="10.800" rx="1.500" stroke="#ddd" strokeWidth="1.100" /><path d="M3 .6h8.400v10" stroke="#ddd" /></S>;
const WinClose = () => <S w={12} h={12}><path d="M.5 .5l11 11M11.500 .5l-11 11" stroke="#ddd" strokeWidth="1.100" /></S>;
const WhiteX = () => <S w={12} h={12}><path d="M1.500 1.500l9 9M10.500 1.500l-9 9" stroke="#fff" strokeWidth="3" /></S>;
const WhitePlus = () => <S w={10} h={10}><path d="M0 5h10M5 0v10" stroke="#fff" strokeWidth="3" /></S>;
const ImePunct = () => <S w={14} h={14}><circle cx="3.500" cy="5" r="2" stroke="#0a76d8" strokeWidth="1.300" /><path d="M11 4q2 2-1 6" stroke="#0a76d8" strokeWidth="2" /></S>;
const ImeMic = () => <S w={12} h={16}><rect x="3" y="0" width="6" height="10" rx="3" fill="#0a76d8" /><path d="M1 7c0 6 10 6 10 0M6 12v3M3 15.500h6" stroke="#0a76d8" strokeWidth="1.200" /></S>;
const ImeKeys = () => <S w={15} h={12}><rect width="15" height="12" rx="1.500" fill="#0a76d8" /><path d="M2 3h11M2 6h11" stroke="#fff" strokeDasharray="1.500 1" /><path d="M4 9h7" stroke="#fff" /></S>;
const ImeGrid = () => <S w={14} h={13}><rect width="6" height="6" rx="1.500" fill="#7b6fd8" /><rect x="7.500" width="6" height="6" rx="1.500" fill="#7b6fd8" /><rect y="7" width="6" height="6" rx="1.500" fill="#d88bd0" /><rect x="7.500" y="7" width="6" height="6" rx="1.500" fill="#5b8fe8" /></S>;
const FolderFindIcon = () => <S w={24} h={25}><path d="M0 3h9l3 3h10v14H0z" fill="#eeb92d" /><path d="M3 9h21l-3 13H0z" fill="#fde08a" /><Binoc x={12} y={14} /></S>;

/* ---------- composites ---------- */
const Col = ({ w, pad, slot, rows, children }) => (
  <ColBox $w={w} $pad={pad}>
    {children}
    {rows.map((r, i) => (
      <ToolRow key={i} $off={r.off} $active={r.active}>
        <IconSlot $w={slot}>{r.icon}</IconSlot>
        {r.label}
        {r.arrow && <DropArrow $off={r.off} $ml={r.ml} />}
        {r.corner && <CornerMark />}
      </ToolRow>
    ))}
  </ColBox>
);
const LargeTool = ({ w, icon, label, drop, corner, active }) => (
  <Large $w={w} $active={active}>
    <LargeIcon>{icon}</LargeIcon>
    <LargeLabel>{label}{corner && <CornerMark style={{ marginBottom: 2 }} />}</LargeLabel>
    {drop && <LargeDrop />}
  </Large>
);

const docLines = [
  { t: '盼望着, 盼望着……翘首以盼的新年近了。街市上车水马龙,', just: true },
  { t: '人山人海，好不热闹。34 瞧，拎着大大小小行李箱的人在', just: true },
  { t: '街上行走，汽车的鸣笛声，商店的叫卖声，人的脚步声……', just: true },
  { t: '编织成热闹而又吉祥的交响乐。新年的脚步近了，年味儿越', just: true },
  { t: '来越浓。' },
];
const menus = ['文件', '编辑(E)', '视图(V)', '文档(D)', '注释(C)', '表单(R)', '工具(T)', '窗口(W)'];
const ticks = ['#7a828e', '#7a828e', '#7a828e', '#7a828e', '#7a828e', '#d8c23c', '#d8c23c', '#c6d04a', '#a8d060', '#8ed070', '#8ed070', '#70d090', '#70d0a0', '#60d0b0', '#60c8c0'];

const FooterGap = styled.div`height: 8px; flex: none;`;

export default function App() {
  return (
    <Shell>
      <Global />
      <TitleBar>
        <LogoIcon />
        <AppTitle>盼望着迅捷PDF编辑器</AppTitle>
        <VipButton>购买VIP</VipButton>
        <TitleAction $gap={9} $ml={19}><TitleIconChat />客服入口</TitleAction>
        <TitleAction $gap={8} $ml={14}><TitleIconUser />注册/登录</TitleAction>
        <TitleAction $gap={8} $ml={26}><TitleIconMenu />菜单</TitleAction>
        <WinControls><WinMin /><WinMax /><WinClose /></WinControls>
      </TitleBar>
      <Frame>
        <MenuBar>
          {menus.map(m => <MenuItem key={m}>{m}</MenuItem>)}
          <MenuRight>
            <MenuTool><FindIcon />查找(F)</MenuTool>
            <MenuTool $ml={5}><FolderFindIcon />高级查找(S)</MenuTool>
          </MenuRight>
        </MenuBar>
        <Ribbon>
          <LargeTool w={58} icon={<FolderIcon />} label="打开(O)..." drop />
          <Sep />
          <Col w={85} pad={6} slot={26} rows={[
            { icon: <SaveIcon />, label: '保存(S)', off: true },
            { icon: <PrintIcon />, label: '打印(P)...' },
            { icon: <ExportIcon />, label: '导出', arrow: true },
          ]} />
          <Col w={70} slot={27} rows={[
            { icon: <ScanIcon />, label: '扫描', arrow: true },
            { icon: <NewIcon />, label: '新建', arrow: true },
          ]} />
          <Col w={84} slot={25} rows={[
            { icon: <UndoIcon />, label: '撤销(U)', off: true, arrow: true },
            { icon: <UndoIcon flip />, label: '重做(R)', off: true, arrow: true },
          ]} />
          <Col w={80} slot={26} rows={[
            { icon: <BackIcon />, label: '后退' },
            { icon: <BackIcon flip off />, label: '前一视图', off: true },
          ]} />
          <LargeTool w={51} active icon={<HandIcon />} label="手形工具" />
          <LargeTool w={53} icon={<SelectIcon />} label="选取工具" />
          <LargeTool w={75} icon={<AnnotIcon />} label="编辑注释工具" />
          <Col w={83} pad={4} slot={25} rows={[
            { icon: <CameraIcon />, label: '快照' },
            { icon: <ClipIcon />, label: '剪贴板', arrow: true, ml: 8 },
            { icon: <FindIcon />, label: '查找', arrow: true },
          ]} />
          <LargeTool w={50} icon={<ActualIcon />} label="实际大小" />
          <Col w={81} pad={6} slot={25} rows={[
            { icon: <FitIcon />, label: '匹配页面' },
            { icon: <FitIcon width />, label: '匹配宽度', active: true },
            { icon: <FitIcon border />, label: '匹配可见' },
          ]} />
          <ColBox $w={85} $pad={4}>
            <ZoomCombo $w={81} $h={24} $m="2px 0 2px -2px">236.98%<DropArrow $ml={0} /></ZoomCombo>
            <ToolRow><IconSlot $w={25}><CirclePM /></IconSlot>放大</ToolRow>
            <ToolRow><IconSlot $w={25}><CirclePM minus /></IconSlot>缩小</ToolRow>
          </ColBox>
          <Col w={94} pad={2} slot={26} rows={[
            { icon: <ZoomToolIcon />, label: '缩放工具', arrow: true },
            { icon: <RotateIcon />, label: '逆时针(W)' },
            { icon: <RotateIcon flip />, label: '顺时针(C)' },
          ]} />
          <LargeTool w={52} icon={<EditContentIcon />} label="编辑内容" drop />
          <LargeTool w={52} icon={<AddIcon />} label="添加" drop />
          <LargeTool w={54} icon={<FormIcon />} label="编辑表单" />
          <Col w={77} pad={4} slot={26} rows={[
            { icon: <TypewriterIcon />, label: '打字机', corner: true },
            { icon: <BoxTIcon />, label: '文本框', corner: true },
            { icon: <CalloutIcon />, label: '标注', corner: true },
          ]} />
          <Sep />
          <Col w={80} pad={6} slot={26} rows={[
            { icon: <HighlightIcon />, label: '高亮', corner: true },
            { icon: <StrikeIcon />, label: '删除线', corner: true },
            { icon: <UnderIcon />, label: '下划线', corner: true },
          ]} />
          <Sep />
          <Col w={91} pad={4} slot={27} rows={[
            { icon: <NoteIcon />, label: '便贴', corner: true },
            { icon: <PaperclipIcon />, label: '添加附件', corner: true },
            { icon: <SpeakerIcon />, label: '声音', corner: true },
          ]} />
          <Sep />
          <LargeTool w={55} icon={<LineIcon />} label="线条" corner />
          <Col w={73} pad={2} slot={26} rows={[
            { icon: <ArrowIcon />, label: '箭头', corner: true },
            { icon: <EllipseIcon />, label: '椭圆形', corner: true },
            { icon: <RectIcon />, label: '矩形', corner: true },
          ]} />
          <Col w={76} pad={2} slot={26} rows={[
            { icon: <PolylineIcon />, label: '多边形', corner: true },
            { icon: <PentagonIcon />, label: '多边形', corner: true },
            { icon: <CloudIcon />, label: '云状', corner: true },
          ]} />
          <Sep />
          <LargeTool w={58} icon={<StampIcon />} label="图章" drop />
          <Sep />
          <Col w={66} pad={5} slot={26} rows={[
            { icon: <PencilIcon />, label: '铅笔', corner: true },
            { icon: <EraserIcon />, label: '擦除' },
          ]} />
          <Col w={65} pad={5} slot={23} rows={[
            { icon: <DistanceIcon />, label: '距离', corner: true },
            { icon: <PerimIcon />, label: '周长', corner: true },
            { icon: <AreaIcon />, label: '面积', corner: true },
          ]} />
          <Collapse />
        </Ribbon>
        <QuickBar>
          <QuickTool><CrownIcon />独占模式</QuickTool>
          <QuickTool $ml={6}><PropsIcon />属性(P)...</QuickTool>
          <QuickEnd><Collapse $mt={1} /><Collapse $mt={1} /></QuickEnd>
        </QuickBar>
        <TabBar>
          <Tab>盼望着<TabClose>×</TabClose></Tab>
          <TabAdd><WhitePlus /></TabAdd>
          <BarClose><WhiteX /></BarClose>
        </TabBar>
        <Main>
          <Canvas>
            <CanvasInner>
              <Page>
                {docLines.map(l => (
                  <DocLine key={l.t} $just={l.just}>
                    {l.t.split(/(……)/).map((part, i) => part === '……' ? <Dots key={i}>{part}</Dots> : part)}
                  </DocLine>
                ))}
              </Page>
            </CanvasInner>
          </Canvas>
          <ScrollBar>
            <ScrollBtn />
            <ScrollThumb><i /><i /><i /></ScrollThumb>
            <ScrollTrack />
            <ScrollBtn $down />
          </ScrollBar>
        </Main>
        <StatusBar>
          <StatusLeft>
            <IconSlot $w={27}><GearsIcon /></IconSlot>
            选项...
            <DropArrow $ml={7} />
            <StatusSep $ml={6} $mr={5} />
            <SizeIcon />
            <DimText $w={71}><span>W: 210.0mm</span><span>&nbsp;H: 297.0mm</span></DimText>
            <StatusSep $ml={0} $mr={3} />
            <CrossIcon />
            <DimText $w={20}><span>X :</span><span>Y :</span></DimText>
          </StatusLeft>
          <StatusNav>
            <NavIcon kind="first" off />
            <NavIcon kind="prev" off />
            <PageInput>1<PageSlash>/</PageSlash><PageTotal>2</PageTotal></PageInput>
            <NavIcon kind="next" />
            <NavIcon kind="last" />
            <StatusSep $ml={1} />
            <BackIcon />
            <BackIcon flip off />
          </StatusNav>
          <StatusRight>
            <StatusItem><PageGlyph kind="one" /></StatusItem>
            <StatusItem $ml={7} $on><PageGlyph kind="cont" /></StatusItem>
            <StatusItem $ml={2}><PageGlyph kind="two" /></StatusItem>
            <StatusItem $ml={4}><PageGlyph kind="four" /></StatusItem>
            <ZoomCombo $w={82} $h={25} $m="0 0 0 5px">236.98%<DropArrow $ml={0} /></ZoomCombo>
            <StatusSep $ml={5} $mr={5} />
            <CirclePM minus size={22} />
            <Slider />
            <StatusItem $ml={5}><CirclePM size={22} /></StatusItem>
            <StatusItem $ml={9}><FitWinIcon /></StatusItem>
            <DropArrow $ml={12} />
          </StatusRight>
        </StatusBar>
      </Frame>
      <FooterGap />

      <ImeLogo width="34" height="34" viewBox="0 0 34 34">
        <path d="M4 6L26 1l7 22-22 9z" fill="#fa5a14" />
        <path d="M24 9c-5-3-14-1-13 3s11 2 12 7-8 6-14 3" stroke="#fff" strokeWidth="3.500" fill="none" />
      </ImeLogo>
      <ImeBar><ImeZh>中</ImeZh><ImePunct /><ImeMic /><ImeKeys /><ImeGrid /></ImeBar>

      <Popup>
        <PopupDeco width="298" height="168" fill="none">
          <path d="M180 136V100l60-60 56 8M192 104v36h72V96" stroke="#fbc98a" strokeWidth="12" opacity=".35" />
          <path d="M-5 115h30l30 30M12 135v20h30" stroke="#fbc98a" strokeWidth="8" opacity=".35" />
        </PopupDeco>
        <PopupTitle>试用版</PopupTitle>
        <PopupBadge width="62" height="58" viewBox="0 0 62 58">
          <path d="M0 35h62l-5 8 5 9H0l5-9z" fill="#f3c486" />
          <path d="M10 5l21-5 21 5v28c0 8-10 13-21 16C20 46 10 41 10 33z" fill="#f2c48a" stroke="#f7d9ad" strokeWidth="2" />
          <path d="M15 9l16-4v40C22 42 15 38 15 32z" fill="#f9ddb5" opacity=".7" />
          <path d="M22 20l4 4 5-8 5 8 4-4-2 14H24z" fill="#b36f2b" />
          <path d="M7 40h48v12l-15 1-9 5-9-5-15-1z" fill="#f5c990" />
          <text x="31" y="50" fontFamily="Liberation Sans" fontSize="11" fill="#c99a63" textAnchor="middle">VIP</text>
        </PopupBadge>
        <PopupBody>试用版保存后将添加水印<br />开通VIP即可去除水印!</PopupBody>
        <PopupBtn>立即开通VIP</PopupBtn>
      </Popup>
      <Activate>
        <ActivateBig>激活 Windows</ActivateBig>
        <ActivateSmall>转到“设置”以激活 Windows。</ActivateSmall>
      </Activate>
      <SideWidget>{ticks.map((c, i) => <SideTick key={i} $c={c} />)}</SideWidget>

      <WatermarkLogo width="42" height="40" viewBox="0 0 42 40" fill="none">
        <path d="M42 1C22 2 4 10 1 22c-1 8 8 15 22 17C12 34 6 28 9 21 12 13 26 6 42 1z" fill="#4d9fd6" />
        <path d="M30 12C20 13 14 18 15 24s8 7 14 4" stroke="#3f9a52" strokeWidth="2.500" />
      </WatermarkLogo>
      <Watermark>
        <WatermarkTitle>极光下载站</WatermarkTitle>
        <WatermarkUrl>www.xz7.com</WatermarkUrl>
      </Watermark>

      <RedArrow width="110" height="120" viewBox="0 0 110 120" fill="none">
        <path d="M10 112L92 17" stroke="#e3141c" strokeWidth="3.500" strokeLinecap="round" />
        <path d="M99 9L67 29l13 5 2 12z" fill="#e3141c" />
      </RedArrow>
    </Shell>
  );
}
